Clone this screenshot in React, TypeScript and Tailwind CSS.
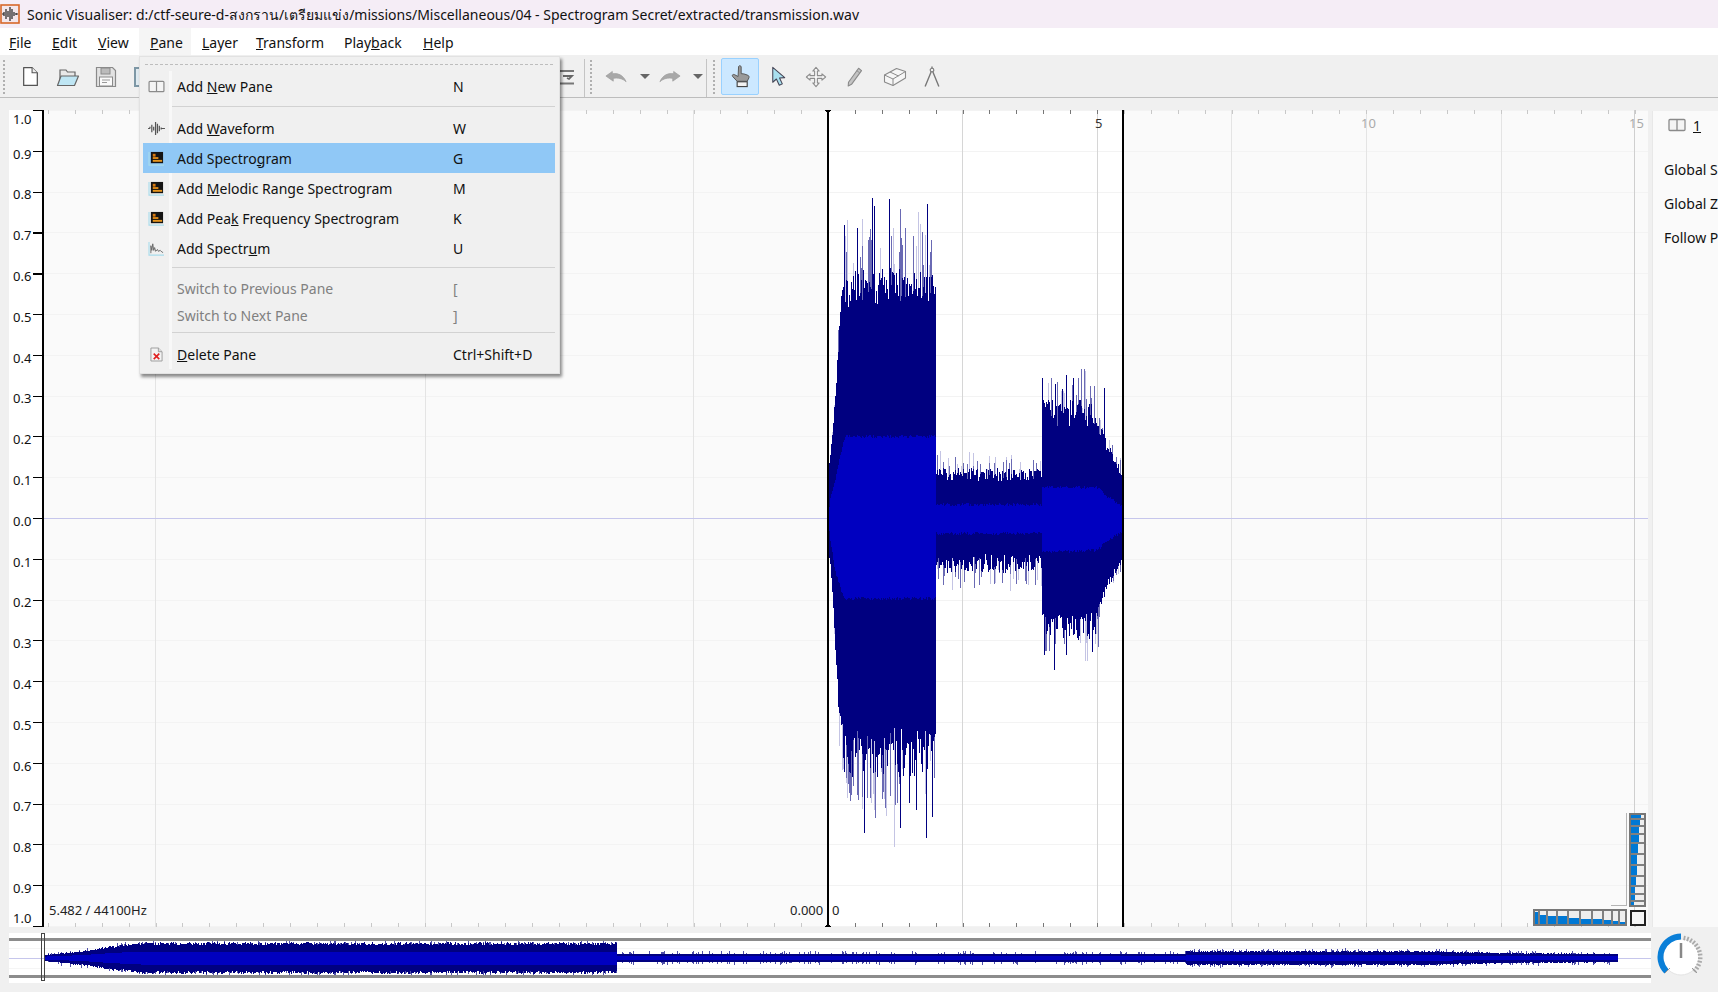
import { ReactNode } from "react";

const font = "font-['Noto_Sans','Open_Sans',sans-serif]";

// seeded so every render draws the same wave
function makeRandom(seed: number) {
  let s = seed;
  return () => {
    s = (s + 0x6d2b79f5) | 0;
    let t = Math.imul(s ^ (s >>> 15), 1 | s);
    t = (t + Math.imul(t ^ (t >>> 7), 61 | t)) ^ t;
    return ((t ^ (t >>> 14)) >>> 0) / 4294967296;
  };
}

function lerp(points: number[][], x: number) {
  if (x <= points[0][0]) return points[0][1];
  for (let i = 1; i < points.length; i++) {
    if (x <= points[i][0]) {
      const [x0, y0] = points[i - 1];
      const [x1, y1] = points[i];
      return y0 + ((y1 - y0) * (x - x0)) / (x1 - x0);
    }
  }
  return points[points.length - 1][1];
}

function envelope(x: number) {
  if (x < 936) {
    const ramp = Math.min(1, Math.max(0.05, (x - 832) / 12));
    return {
      up: lerp([[828, 475], [830, 455], [833, 425], [836, 385], [840, 330], [843, 308], [936, 308]], x),
      low: lerp([[828, 550], [830, 562], [833, 605], [836, 660], [840, 705], [845, 728], [936, 726]], x),
      inUp: lerp([[828, 518], [830, 500], [835, 480], [843, 443], [846, 438], [936, 438]], x),
      inLow: lerp([[828, 518], [830, 540], [835, 570], [843, 595], [846, 597], [936, 597]], x),
      fringeUp: 40 * ramp,
      fringeLow: 50 * ramp,
      magUp: 62 * ramp,
      magLow: 60 * ramp,
    };
  }
  if (x < 1042) return { up: 481, low: 554, inUp: 506, inLow: 532, fringeUp: 13, fringeLow: 19, magUp: 22, magLow: 26 };
  const tail = x >= 1097;
  return {
    up: lerp([[1042, 428], [1095, 428], [1106, 450], [1115, 470], [1123, 482]], x),
    low: lerp([[1042, 612], [1095, 612], [1106, 582], [1115, 565], [1123, 552]], x),
    inUp: lerp([[1042, 488], [1097, 489], [1106, 497], [1123, 508]], x),
    inLow: lerp([[1042, 550], [1097, 549], [1106, 540], [1123, 530]], x),
    fringeUp: tail ? 12 : 28,
    fringeLow: tail ? 10 : 28,
    magUp: tail ? 16 : 40,
    magLow: tail ? 12 : 30,
  };
}

// the tall single spikes that stand out of the wave: [x, y]
const spikesSolid = [[872, 198], [874, 206], [889, 199], [927, 204], [844, 225], [857, 228], [864, 833], [900, 828], [926, 838], [932, 817], [916, 810], [909, 803], [1042, 378], [1055, 384], [1062, 389], [1066, 375], [1073, 378], [1104, 388], [1044, 655], [1054, 670], [1066, 655], [1092, 652]];
const spikesMid = [[900, 209], [905, 228], [870, 229], [922, 232], [875, 818], [897, 803], [851, 795], [857, 795], [1084, 369], [1081, 369], [1098, 647]];
const spikesPale = [[847, 220], [918, 212], [894, 847], [1085, 371]];

function buildWave() {
  const r = makeRandom(41);
  let body = "";
  let inner = "";
  let mid = "";
  let pale = "";
  for (let x = 829; x < 1122; x++) {
    const e = envelope(x);
    const px = x + 0.5;
    const a = e.up - Math.pow(r(), 0.8) * e.fringeUp;
    const b = e.low + Math.pow(r(), 0.8) * e.fringeLow;
    body += `M${px} ${a.toFixed(1)}V${b.toFixed(1)}`;
    inner += `M${px} ${(e.inUp - r() * 3).toFixed(1)}V${(e.inLow + r() * 3).toFixed(1)}`;
    if (r() < 0.16) mid += `M${px} ${(e.up - e.fringeUp - r() * e.magUp * 0.6).toFixed(1)}V${e.up}`;
    if (r() < 0.16) mid += `M${px} ${e.low}V${(e.low + e.fringeLow + r() * e.magLow * 0.6).toFixed(1)}`;
    if (r() < 0.16) pale += `M${px} ${(e.up - e.fringeUp * 0.7 - r() * e.magUp).toFixed(1)}V${e.up}`;
    if (r() < 0.16) pale += `M${px} ${e.low}V${(e.low + e.fringeLow * 0.7 + r() * e.magLow).toFixed(1)}`;
  }
  const toPath = (list: number[][]) =>
    list.map(([x, y]) => `M${x + 0.5} ${y}V${y < 518 ? envelope(x).up : envelope(x).low}`).join("");
  return {
    body: body + toPath(spikesSolid),
    inner,
    mid: mid + toPath(spikesMid),
    pale: pale + toPath(spikesPale),
  };
}

function buildOverview() {
  const r = makeRandom(7);
  let body = "";
  let inner = "";
  let mid = "";
  for (let x = 45; x < 1618; x++) {
    let h = 3.6;
    let core = 1.6;
    if (x < 617) {
      h = lerp([[45, 3], [60, 4], [90, 7], [110, 10], [142, 13], [617, 13]], x);
      core = h * 0.5;
    } else if (x >= 1186) {
      h = lerp([[1186, 6], [1424, 6], [1500, 4.5], [1618, 3.6]], x);
      core = h * 0.45;
    }
    const px = x + 0.5;
    const jitter = h * 0.22;
    body += `M${px} ${(958 - h - r() * jitter).toFixed(1)}V${(958 + h + r() * jitter).toFixed(1)}`;
    inner += `M${px} ${(958 - core).toFixed(1)}V${(958 + core).toFixed(1)}`;
    if (r() < 0.22) mid += `M${px} ${(958 - h - r() * jitter - r() * 3).toFixed(1)}V${(958 + h + r() * jitter + r() * 3).toFixed(1)}`;
  }
  return { body, inner, mid };
}

const wave = buildWave();
const overview = buildOverview();

const scaleLabels = ["1.0", "0.9", "0.8", "0.7", "0.6", "0.5", "0.4", "0.3", "0.2", "0.1", "0.0", "0.1", "0.2", "0.3", "0.4", "0.5", "0.6", "0.7", "0.8", "0.9", "1.0"];
const gridXs = [155, 425, 693, 962, 1097, 1231, 1366, 1501];
const tickXs = Array.from({ length: 60 }, (_, i) => 828 + (i - 29) * 26.9);

const vWheel = [
  { h: 3, f: 75 }, { h: 5, f: 68 }, { h: 6, f: 62 }, { h: 7, f: 58 }, { h: 9, f: 50 },
  { h: 9, f: 48 }, { h: 9, f: 45 }, { h: 8, f: 38 }, { h: 6, f: 32 }, { h: 5, f: 28 }, { h: 3, f: 20 },
];
const hWheel = [
  { w: 3, f: 90 }, { w: 6, f: 72 }, { w: 8, f: 65 }, { w: 9, f: 58 }, { w: 10, f: 50 },
  { w: 10, f: 42 }, { w: 9, f: 36 }, { w: 7, f: 30 }, { w: 5, f: 24 }, { w: 5, f: 18 },
];

const menuBar = [
  { key: "File", cls: "w-[41px] pl-[9px]", label: <><u>F</u>ile</> },
  { key: "Edit", cls: "w-[46px] pl-[11px]", label: <><u>E</u>dit</> },
  { key: "View", cls: "w-[52px] pl-[11px]", label: <><u>V</u>iew</> },
  { key: "Pane", cls: "w-[52px] pl-[11px] bg-[#f5f5f5]", label: <><u>P</u>ane</> },
  { key: "Layer", cls: "w-[54px] pl-[11px]", label: <><u>L</u>ayer</> },
  { key: "Transform", cls: "w-[88px] pl-[11px]", label: <><u>T</u>ransform</> },
  { key: "Playback", cls: "w-[79px] pl-[11px]", label: <>Play<u>b</u>ack</> },
  { key: "Help", cls: "w-[60px] pl-[11px]", label: <><u>H</u>elp</> },
];

function PaneIcon({ className }: { className?: string }) {
  return (
    <svg viewBox="0 0 18 14" className={className}>
      <rect x="1" y="1.5" width="16" height="11" rx="1" fill="#f4f4f4" stroke="#8a8a8a" strokeWidth="1.3" />
      <path d="M9 1.5v11" stroke="#8a8a8a" strokeWidth="1.3" />
    </svg>
  );
}

function WaveIcon() {
  return (
    <svg viewBox="0 0 18 16" className="w-[17px] h-[15px]">
      <path d="M0 8h2M2 8V6M4 4v8M6 6v4M8 1v14M10 3v10M12 5v6M14 7v2M14 8h4" stroke="#555" strokeWidth="1.3" fill="none" />
    </svg>
  );
}

function SpectroIcon() {
  return (
    <svg viewBox="0 0 18 16" className="w-[17px] h-[15px]">
      <path d="M1 1v14h16" stroke="#a8dcec" strokeWidth="1.2" fill="none" />
      <rect x="3" y="1" width="13" height="12" fill="#141414" />
      <rect x="5" y="3" width="3" height="3" fill="#d97a10" />
      <rect x="5" y="6.5" width="6" height="2" fill="#e08a18" />
      <rect x="5" y="9.5" width="10" height="2" fill="#e8961e" />
    </svg>
  );
}

function SpectrumIcon() {
  return (
    <svg viewBox="0 0 18 16" className="w-[17px] h-[15px]">
      <path d="M1 1v14h16" stroke="#a8dcec" strokeWidth="1.2" fill="none" />
      <path d="M3 13V5l1 5 1-7 1 7 1-3 1 4 2-2 1 2 2-1 2 2h1" stroke="#666" strokeWidth="1" fill="none" />
    </svg>
  );
}

function DeleteIcon() {
  return (
    <svg viewBox="0 0 14 16" className="w-[13px] h-[15px]">
      <path d="M1 1h8l4 4v10H1z" fill="#f3f3f3" stroke="#999" />
      <path d="M9 1v4h4" fill="#ddd" stroke="#999" />
      <path d="M4 7l6 6M10 7l-6 6" stroke="#e02020" strokeWidth="1.7" />
    </svg>
  );
}

function Rule() {
  return <div className="border-t border-[#d2d2d2]" />;
}

function MenuRow({ icon, label, shortcut, h = "h-[30px]", active, disabled }: {
  icon?: ReactNode; label: ReactNode; shortcut: string; h?: string; active?: boolean; disabled?: boolean;
}) {
  return (
    <div className={`flex ${h} ${active ? "bg-[#90c8f6]" : ""}`}>
      <div className="w-[26px] flex items-center justify-center pl-[1px]">{icon}</div>
      <div className={`w-[3px] ${active ? "" : "bg-[#f8f8f8]"}`} />
      <div className={`flex flex-1 items-center pl-[5px] ${disabled ? "text-[#808080]" : "text-[#111]"}`}>
        <span className="w-[276px]">{label}</span>
        <span>{shortcut}</span>
      </div>
    </div>
  );
}

function MenuGap({ h, pt }: { h: string; pt: string }) {
  return (
    <div className={`flex ${h}`}>
      <div className="w-[26px]" />
      <div className="w-[3px] bg-[#f8f8f8]" />
      <div className={`flex-1 ${pt}`}><Rule /></div>
    </div>
  );
}

function PaneMenu() {
  return (
    <div className="absolute left-[139px] top-[56px] w-[421px] h-[318px] border border-[#e2e2e2] bg-[#f0f0f0] pl-[3px] pr-[4px] pt-[3px] text-[14px] shadow-[2px_3px_3px_rgba(0,0,0,0.45)]">
      <div className="h-[11px] pt-[4px] px-[2px]">
        <div className="border-t border-dashed border-[#bdbdbd]" />
      </div>
      <MenuRow icon={<PaneIcon className="w-[17px] h-[13px]" />} label={<>Add <u>N</u>ew Pane</>} shortcut="N" />
      <MenuGap h="h-[13px]" pt="pt-[5px]" />
      <MenuRow h="h-[29px]" icon={<WaveIcon />} label={<>Add <u>W</u>aveform</>} shortcut="W" />
      <MenuRow active icon={<SpectroIcon />} label={<>Add Spectro<u>g</u>ram</>} shortcut="G" />
      <MenuRow icon={<SpectroIcon />} label={<>Add <u>M</u>elodic Range Spectrogram</>} shortcut="M" />
      <MenuRow icon={<SpectroIcon />} label={<>Add Pea<u>k</u> Frequency Spectrogram</>} shortcut="K" />
      <MenuRow icon={<SpectrumIcon />} label={<>Add Spectr<u>u</u>m</>} shortcut="U" />
      <MenuGap h="h-[12px]" pt="pt-[4px]" />
      <MenuRow h="h-[27px]" disabled label="Switch to Previous Pane" shortcut="[" />
      <MenuRow h="h-[27px]" disabled label="Switch to Next Pane" shortcut="]" />
      <MenuGap h="h-[10px]" pt="pt-[3px]" />
      <MenuRow icon={<DeleteIcon />} label={<><u>D</u>elete Pane</>} shortcut="Ctrl+Shift+D" />
    </div>
  );
}

function Handle({ cls }: { cls: string }) {
  return <div className={`h-[34px] w-[2px] border-l-2 border-dotted border-[#b0b0b0] ${cls}`} />;
}

function Sep() {
  return <div className="self-stretch mt-[3px] w-px bg-[#c4c4c4]" />;
}

function Tool({ w, cls = "", children }: { w: string; cls?: string; children: ReactNode }) {
  return <div className={`flex h-[37px] items-center justify-center ${w} ${cls}`}>{children}</div>;
}

function DropArrow() {
  return <div className="h-0 w-0 border-x-[5px] border-t-[5px] border-x-transparent border-t-[#666]" />;
}

function UndoIcon({ cls = "" }: { cls?: string }) {
  return (
    <svg viewBox="0 0 24 14" className={`w-[22px] h-[13px] ${cls}`}>
      <path d="M1 6.5 8 1.5v2.6c6-1.2 12 1.5 15 8.6-4-3.6-9-4.6-14-3.6v3z" fill="#a8a8a8" stroke="#a0a0a0" strokeWidth=".8" />
    </svg>
  );
}

function Toolbar() {
  return (
    <div className="flex h-[43px] items-center border-b border-[#bdbdbd] bg-[#f0f0f0] pt-px">
      <Handle cls="ml-[3px]" />
      <Tool w="w-[38px]" cls="ml-[6px]">
        <svg viewBox="0 0 16 20" className="w-[17px] h-[21px]">
          <path d="M1.5 1.5h8l5 5v12h-13z" fill="#fff" stroke="#555" strokeWidth="1.2" strokeLinejoin="round" />
          <path d="M9.5 1.5v5h5" fill="#eee" stroke="#555" strokeWidth="1" />
        </svg>
      </Tool>
      <Tool w="w-[38px]">
        <svg viewBox="0 0 24 20" className="w-[24px] h-[20px]">
          <path d="M4 17V3h6l1.5 2H19v4" fill="#e8e8e8" stroke="#666" strokeWidth="1.2" />
          <path d="M1.5 18.5 5 9h17.5l-4 9.5z" fill="#bfe6f4" stroke="#666" strokeWidth="1.2" strokeLinejoin="round" />
        </svg>
      </Tool>
      <Tool w="w-[38px]">
        <svg viewBox="0 0 22 22" className="w-[22px] h-[22px]">
          <path d="M1.5 1.5h16l3 3v16h-19z" fill="#e2e2e2" stroke="#8a8a8a" strokeWidth="1.2" />
          <rect x="6" y="2" width="9" height="6" fill="#bbb" stroke="#8a8a8a" />
          <rect x="4.5" y="11" width="13" height="9" fill="#fafafa" stroke="#8a8a8a" />
          <path d="M7 14h8M7 16.5h5" stroke="#999" />
        </svg>
      </Tool>
      <Tool w="w-[38px]" cls="pl-[2px]">
        <div className="h-[20px] w-[22px] border-2 border-[#7d97a5] bg-[#dfeaf0]" />
      </Tool>
      <div className="w-[387px]" />
      <Tool w="w-[34px]">
        <svg viewBox="0 0 16 16" className="w-[16px] h-[16px]">
          <path d="M1 2h14M1 14.5h14" stroke="#777" strokeWidth="1.8" />
          <path d="M4 7h9l-3 3-2-1" fill="none" stroke="#666" strokeWidth="1.8" />
        </svg>
      </Tool>
      <Sep />
      <Handle cls="ml-[5px]" />
      <Tool w="w-[34px]" cls="ml-[7px]"><UndoIcon /></Tool>
      <Tool w="w-[16px]" cls="ml-[4px]"><DropArrow /></Tool>
      <Tool w="w-[34px]"><UndoIcon cls="scale-x-[-1]" /></Tool>
      <Tool w="w-[16px]" cls="ml-[3px]"><DropArrow /></Tool>
      <Sep />
      <Handle cls="ml-[6px]" />
      <Tool w="w-[38px]" cls="ml-[6px] rounded-[2px] border border-[#99d1ff] bg-[#cce8ff]">
        <svg viewBox="0 0 24 26" className="w-[23px] h-[25px]">
          <path d="M10 2.5c.8-1.2 2.4-1 2.7.5v7l2.8.3 2.2.7 2.3.9c1 .5 1 1.5.8 2.5L19 18H8.5L3.8 13c-1-1.4.3-2.6 1.8-2l3.9 2z" fill="#9a9a9a" stroke="#555" strokeWidth="1" strokeLinejoin="round" />
          <rect x="8.5" y="18.5" width="10.5" height="5" fill="#f2f2f2" stroke="#444" strokeWidth="1.2" />
        </svg>
      </Tool>
      <Tool w="w-[38px]">
        <svg viewBox="0 0 24 24" className="w-[23px] h-[23px]">
          <path d="M6 2.5v15.5l3.8-3.4 3 6.6 3.2-1.5-2.9-6.1 5.4-.4z" fill="#a8dfee" stroke="#445" strokeWidth="1.1" strokeLinejoin="round" />
        </svg>
      </Tool>
      <Tool w="w-[38px]">
        <svg viewBox="0 0 24 24" className="w-[22px] h-[22px]">
          <path d="M12 1.5 15.5 5.5H13.5V10.5H18.5V8.5L22.5 12 18.5 15.5V13.5H13.5V18.5H15.5L12 22.5 8.5 18.5H10.5V13.5H5.5V15.5L1.5 12 5.5 8.5V10.5H10.5V5.5H8.5z" fill="#f8f8f8" stroke="#8c8c8c" strokeWidth="1.2" strokeLinejoin="round" />
        </svg>
      </Tool>
      <Tool w="w-[38px]">
        <svg viewBox="0 0 24 24" className="w-[22px] h-[22px]">
          <path d="M17 2.5l3.2 2.5L9.3 20l-3.6 1.7.3-4z" fill="#c4c4c4" stroke="#8a8a8a" strokeWidth="1.2" strokeLinejoin="round" />
          <path d="M15 5l3.2 2.5" stroke="#8a8a8a" />
        </svg>
      </Tool>
      <Tool w="w-[38px]" cls="ml-[3px]">
        <svg viewBox="0 0 24 22" className="w-[24px] h-[22px]">
          <path d="M1.5 9 13.5 2.5 22.5 5.5V12L10 19.5 1.5 16z" fill="#f6f6f6" stroke="#8a8a8a" strokeWidth="1.1" strokeLinejoin="round" />
          <path d="M1.5 9 10 13V19.5M10 13 22.5 5.5M7 6l8.5 4" fill="none" stroke="#8a8a8a" strokeWidth="1" />
        </svg>
      </Tool>
      <Tool w="w-[38px]" cls="-ml-[1px]">
        <svg viewBox="0 0 24 24" className="w-[22px] h-[23px]">
          <circle cx="12" cy="5" r="2" fill="none" stroke="#777" strokeWidth="1.2" />
          <path d="M12 1v2M11 7 4.5 23M13 7l6.5 16" stroke="#777" strokeWidth="1.5" fill="none" />
        </svg>
      </Tool>
    </div>
  );
}

function Scale() {
  return (
    <div className="relative flex h-full w-[35px] shrink-0 flex-col justify-between border-r-[2px] border-black bg-white">
      {scaleLabels.map((label, i) => (
        <div key={i} className="flex h-px items-center justify-between">
          <span className={`pl-[4px] text-[13px] text-[#111] ${i === 0 ? "translate-y-[9px]" : i === 20 ? "-translate-y-[8px]" : "translate-y-[3px]"}`}>{label}</span>
          <span className={`w-[9px] bg-black ${i === 3 || i === 4 ? "h-[2px]" : "h-px"}`} />
        </div>
      ))}
    </div>
  );
}

function WaveCanvas() {
  return (
    <svg viewBox="44 110 1604 817" className="absolute inset-0 h-full w-full" shapeRendering="crispEdges">
      <rect x="828" y="110" width="295" height="817" fill="#fff" />
      {scaleLabels.map((_, i) => (
        <path key={i} d={`M44 ${110.5 + Math.round(i * 40.8)}H1648`} stroke="#f3f3f3" />
      ))}
      {gridXs.map((x) => (
        <path key={x} d={`M${x + 0.5} 110V927`} stroke={x > 828 && x < 1123 ? "#d6d6d6" : "#e4e4e4"} />
      ))}
      <path d="M1634.5 110V927" stroke="#cfcfcf" />
      {tickXs.map((x, i) => (
        <path key={i} d={`M${Math.round(x) + 0.5} 110v4M${Math.round(x) + 0.5} 923v4`} stroke={x > 828 && x < 1123 ? "#777" : "#c8c8c8"} />
      ))}
      <path d="M44 518.5H1648" stroke="#c6c6ec" />
      <path d={wave.pale} stroke="#c4c4e4" fill="none" />
      <path d={wave.mid} stroke="#6a6ab4" fill="none" />
      <path d={wave.body} stroke="#000080" fill="none" />
      <path d={wave.inner} stroke="#0000c0" fill="none" />
      <rect x="827" y="110" width="2" height="817" fill="#000" />
      <rect x="1122" y="110" width="2" height="817" fill="#000" />
      <path d="M825 110h6l-3 4zM825 927h6l-3-4z" fill="#000" />
      <path d="M1626.5 813V905.5H1611" stroke="#b4b4b4" fill="none" />
    </svg>
  );
}

function Wheels() {
  return (
    <>
      <div className="absolute left-[1585px] top-[703px] flex h-[94px] w-[17px] flex-col gap-[2px] border-2 border-[#777] bg-[#808080]">
        {vWheel.map((s, i) => (
          <div key={i} className="shrink-0 bg-[#eee]" style={{ height: s.h }}>
            <div className="h-full bg-[#0078d4]" style={{ width: `${s.f}%` }} />
          </div>
        ))}
      </div>
      <div className="absolute left-[1489px] top-[799px] flex h-[17px] w-[94px] gap-[2px] border-2 border-[#777] bg-[#808080]">
        {hWheel.map((s, i) => (
          <div key={i} className="flex shrink-0 flex-col justify-end bg-[#eee]" style={{ width: s.w }}>
            <div className="w-full bg-[#0078d4]" style={{ height: `${s.f}%` }} />
          </div>
        ))}
      </div>
      <div className="absolute left-[1586px] top-[800px] h-[16px] w-[16px] border-2 border-[#222] bg-[#f6f6f6]" />
    </>
  );
}

function Knob() {
  const ticks = Array.from({ length: 13 }, (_, i) => ((i + 1) * 135) / 13);
  return (
    <svg viewBox="0 0 48 48" className="h-[48px] w-[48px] shrink-0">
      <circle cx="24" cy="24" r="18" fill="#fff" stroke="#e4e4e4" />
      {ticks.map((a) => (
        <line key={a} x1="24" y1="2.5" x2="24" y2="7" stroke="#aaa" strokeWidth="1.8" transform={`rotate(${a} 24 24)`} />
      ))}
      <path d="M9.5 38.5A20.5 20.5 0 0 1 24 3.5" fill="none" stroke="#0a7fd8" strokeWidth="6" />
      <path d="M24 10v15" stroke="#888" strokeWidth="2.5" />
      <path d="M8 40l5-5M40 40l-5-5" stroke="#999" strokeWidth="1" />
    </svg>
  );
}

export default function App() {
  return (
    <div className={`relative flex h-screen w-full flex-col overflow-hidden bg-[#f0f0f0] ${font}`}>
      <div className="flex h-[28px] items-center bg-[#f5edf6]">
        <svg viewBox="0 0 20 20" className="h-[20px] w-[20px] shrink-0">
          <rect x="1" y="1" width="18" height="18" fill="#f3e7ec" stroke="#d8682a" strokeWidth="1.6" />
          <path d="M2 10h2M4 8v4M6 5v10M8 7v6M10 3v14M12 5v10M14 8v4M16 9v2M16 10h2" stroke="#222" strokeWidth="1.2" />
        </svg>
        <span className="ml-[7px] whitespace-nowrap text-[14px] text-[#111]">
          Sonic Visualiser: d:/ctf-seure-d-สงกราน/เตรียมแข่ง/missions/Miscellaneous/04 - Spectrogram Secret/extracted/transmission.wav
        </span>
      </div>

      <div className="flex h-[27px] items-stretch bg-white text-[14px] text-[#111]">
        {menuBar.map((m) => (
          <div key={m.key} className={`flex items-center pt-px ${m.cls}`}>
            <span>{m.label}</span>
          </div>
        ))}
      </div>

      <Toolbar />

      <div className="mt-[12px] flex h-[817px] pl-[9px]">
        <Scale />
        <div className="relative w-[1604px] shrink-0 overflow-hidden bg-[#fafafa] text-[13px]">
          <WaveCanvas />
          <span className="absolute left-[1051px] top-[4px] text-[#333]">5</span>
          <span className="absolute left-[1317px] top-[4px] text-[#aaa]">10</span>
          <span className="absolute left-[1585px] top-[4px] text-[#aaa]">15</span>
          <span className="absolute left-[4px] bottom-[7px] bg-[#fafafa] px-px text-[#222]">5.482 / 44100Hz</span>
          <span className="absolute left-[746px] bottom-[7px] text-[#222]">0.000</span>
          <span className="absolute left-[788px] bottom-[7px] text-[#222]">0</span>
          <Wheels />
        </div>
        <div className="ml-[4px] mt-[1px] flex-1 overflow-hidden whitespace-nowrap border-l border-[#e8e8e8] bg-[#fafafa] text-[14px] text-[#111]">
          <div className="flex h-[28px] items-center pl-[15px]">
            <PaneIcon className="h-[14px] w-[18px]" />
            <u className="ml-[7px]">1</u>
          </div>
          <div className="flex flex-col gap-[13px] pl-[11px] pt-[20px]">
            <span>Global Scroll</span>
            <span>Global Zoom</span>
            <span>Follow Playback</span>
          </div>
        </div>
      </div>

      <div className="mt-[6px] flex h-[50px] pl-[9px]">
        <svg viewBox="9 933 1642 50" className="h-[50px] w-[1642px] shrink-0 bg-white" shapeRendering="crispEdges">
          <path d="M9 948.5H1651M9 968.5H1651" stroke="#f5f5f5" />
          <path d="M9 958.5H1651" stroke="#c6c6ec" />
          <path d={overview.mid} stroke="#5050a8" fill="none" />
          <path d={overview.body} stroke="#000080" fill="none" />
          <path d={overview.inner} stroke="#0000c0" fill="none" />
          <path d="M9 939.5H1651M9 976.5H1651" stroke="#8c8c8c" strokeWidth="3" />
          <rect x="41.5" y="933.5" width="3" height="47" fill="none" stroke="#444" />
        </svg>
        <div className="ml-[6px]"><Knob /></div>
      </div>

      <PaneMenu />
    </div>
  );
}
